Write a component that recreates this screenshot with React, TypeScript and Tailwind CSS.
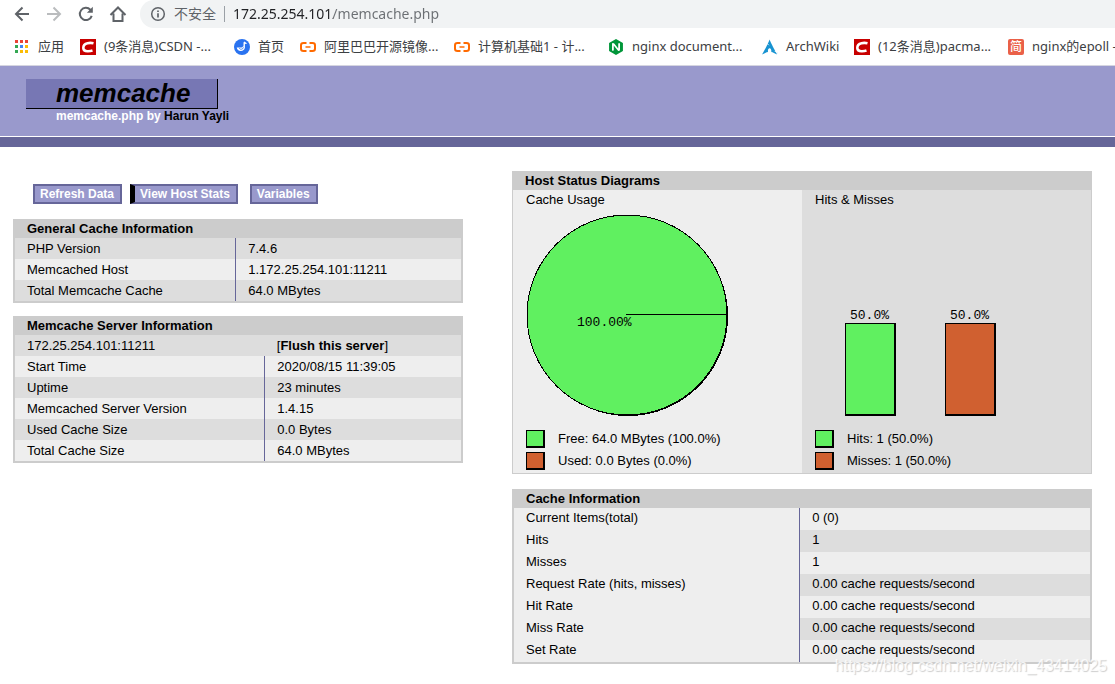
import type { ReactNode } from "react";
import { SiArchlinux, SiNginx } from "react-icons/si";

type Row = { label: string; value: ReactNode };

const GREEN = "#60f060";
const RED = "#d06030";

const generalRows: Row[] = [
  { label: "PHP Version", value: "7.4.6" },
  { label: "Memcached Host", value: "1.172.25.254.101:11211" },
  { label: "Total Memcache Cache", value: "64.0 MBytes" },
];

const serverRows: Row[] = [
  { label: "Start Time", value: "2020/08/15 11:39:05" },
  { label: "Uptime", value: "23 minutes" },
  { label: "Memcached Server Version", value: "1.4.15" },
  { label: "Used Cache Size", value: "0.0 Bytes" },
  { label: "Total Cache Size", value: "64.0 MBytes" },
];

const cacheRows: Row[] = [
  { label: "Current Items(total)", value: "0 (0)" },
  { label: "Hits", value: "1" },
  { label: "Misses", value: "1" },
  { label: "Request Rate (hits, misses)", value: "0.00 cache requests/second" },
  { label: "Hit Rate", value: "0.00 cache requests/second" },
  { label: "Miss Rate", value: "0.00 cache requests/second" },
  { label: "Set Rate", value: "0.00 cache requests/second" },
];

function AppsIcon() {
  const colors = [
    "#ea4335", "#ea4335", "#ea4335",
    "#34a853", "#4285f4", "#fbbc05",
    "#34a853", "#fbbc05", "#fbbc05",
  ];
  return (
    <svg viewBox="0 0 16 16" className="size-4" shapeRendering="crispEdges">
      {colors.map((c, i) => (
        <rect key={i} x={1 + (i % 3) * 5} y={1 + Math.floor(i / 3) * 5} width="3" height="3" fill={c} />
      ))}
    </svg>
  );
}

function CsdnIcon() {
  return (
    <svg viewBox="0 0 16 16" className="size-4">
      <rect width="16" height="16" fill="#c80000" />
      <path
        d="M13.500 4.300C11.500 3.800 9.400 3.800 7.500 4.200C4.800 4.800 3.300 6.600 3.300 8.900C3.400 11.300 5.300 12.300 8 12.200C9.700 12.200 11.200 12 12.500 11.600"
        fill="none"
        stroke="#fff"
        strokeWidth="2.6"
      />
    </svg>
  );
}

function HomePageIcon() {
  return (
    <svg viewBox="0 0 16 16" className="size-4">
      <circle cx="8" cy="8" r="8" fill="#2a73f0" />
      <path d="M10.300 2.500L13.300 4.400L10.900 5V8.800A4.200 4.200 0 0 1 2.700 8.500H7.600L9.500 7.200V3.400Z" fill="#fff" />
      <path d="M9.400 8.300A2.300 2.300 0 0 1 5.200 9.200" fill="none" stroke="#2a73f0" strokeWidth=".8" />
    </svg>
  );
}

function AliyunIcon() {
  return (
    <svg viewBox="0 0 16 16" className="size-4" fill="none" stroke="#ff6a00" strokeWidth="2">
      <path d="M6.500 4H3.500Q1 4 1 6.300V9.700Q1 12 3.500 12H6.500" />
      <path d="M9.500 4H12.500Q15 4 15 6.300V9.700Q15 12 12.500 12H9.500" />
      <path d="M5.500 8H10.500" strokeWidth="1.500" />
    </svg>
  );
}

function JianshuIcon() {
  return (
    <span className="flex size-4 items-center justify-center rounded-xs bg-[#ea6048] text-xs font-medium text-white">
      简
    </span>
  );
}

const bookmarks = [
  { label: "应用", icon: <AppsIcon />, width: "w-[66px]" },
  { label: "(9条消息)CSDN -...", icon: <CsdnIcon />, width: "w-[154px]" },
  { label: "首页", icon: <HomePageIcon />, width: "w-[66px]" },
  { label: "阿里巴巴开源镜像...", icon: <AliyunIcon />, width: "w-[154px]" },
  { label: "计算机基础1 - 计...", icon: <AliyunIcon />, width: "w-[154px]" },
  { label: "nginx document...", icon: <SiNginx className="size-4 text-[#009639]" />, width: "w-[154px]" },
  { label: "ArchWiki", icon: <SiArchlinux className="size-4 text-[#1793d1]" />, width: "w-[92px]" },
  { label: "(12条消息)pacma...", icon: <CsdnIcon />, width: "w-[154px]" },
  { label: "nginx的epoll -", icon: <JianshuIcon />, width: "w-[154px]" },
];

function BrowserBar() {
  return (
    <div className="bg-white font-['Noto_Sans','Noto_Sans_CJK_SC',sans-serif]">
      <div className="flex h-7 items-center gap-3 pl-3 text-[#5f6368]">
        <button aria-label="Back" className="size-5">
          <svg viewBox="0 0 20 20" className="size-5" fill="none" stroke="currentColor" strokeWidth="2">
            <path d="M17 10H4.500M10.500 3.500L4 10L10.500 16.500" />
          </svg>
        </button>
        <button aria-label="Forward" className="size-5 text-[#babcbe]">
          <svg viewBox="0 0 20 20" className="size-5" fill="none" stroke="currentColor" strokeWidth="2">
            <path d="M3 10H15.500M9.500 3.500L16 10L9.500 16.500" />
          </svg>
        </button>
        <button aria-label="Reload" className="size-5">
          <svg viewBox="0 0 22 22" className="size-5" fill="none" stroke="currentColor" strokeWidth="2.2">
            <path d="M17.300 13A6.700 6.700 0 1 1 15.800 6.300L17 7.500" />
            <path d="M18.500 3V9.500H12Z" fill="currentColor" stroke="none" />
          </svg>
        </button>
        <button aria-label="Home" className="size-5">
          <svg viewBox="0 0 20 20" className="size-5" fill="none" stroke="currentColor" strokeWidth="2">
            <path d="M2.500 11L10 3.500L17.500 11M5.500 9.500V17H14.500V9.500" />
          </svg>
        </button>
        <div className="flex h-7 flex-1 items-center gap-2 rounded-l-full bg-[#f1f3f4] pl-2.5">
          <svg viewBox="0 0 16 16" className="size-4" fill="none" stroke="currentColor" strokeWidth="1.500">
            <circle cx="8" cy="8" r="6.300" />
            <path d="M8 7.200V11.500M8 4.500V6" strokeWidth="1.700" />
          </svg>
          <span className="text-sm">不安全</span>
          <span className="h-4 w-px bg-[#9aa0a6]" />
          <input
            aria-label="Address"
            defaultValue="172.25.254.101/memcache.php"
            className="flex-1 bg-linear-to-r from-[#202124] from-[100px] to-[#6b6f73] to-[100px] bg-clip-text text-sm text-transparent outline-none"
          />
        </div>
      </div>
      <nav className="flex h-[38px] overflow-hidden border-b border-[#d5d5e0] pl-3.5 text-[13px] text-[#3c4043]">
        {bookmarks.map((b) => (
          <a key={b.label} href="#" className={`flex shrink-0 items-center gap-2 whitespace-nowrap ${b.width}`}>
            {b.icon}
            {b.label}
          </a>
        ))}
      </nav>
    </div>
  );
}

function Header() {
  return (
    <header>
      <div className="h-[70px] bg-[#9999cc] pt-[13px] pl-[26px] font-bold">
        <h1 className="h-[30px] w-48 border-r border-b border-black bg-[#7777b4] pl-[30px] text-[26px] leading-7 italic">
          <a href="#">memcache</a>
        </h1>
        <p className="pl-[30px] text-xs leading-[14px] text-white">
          <a href="#">memcache.php</a> by <a href="#" className="text-black">Harun Yayli</a>
        </p>
      </div>
      <div className="mt-px h-2.5 bg-[#666699]" />
    </header>
  );
}

function Menu() {
  const item = "border-2 border-[#666699] bg-[#9999cc] pr-1.5 pl-[5px] leading-4";
  return (
    <nav className="mb-0.5 flex pl-5 text-xs font-bold text-white">
      <a href="#" className={`${item} mr-2`}>Refresh Data</a>
      <a href="#" className={`${item} mr-3 border-l-[5px] border-l-black`}>View Host Stats</a>
      <a href="#" className={item}>Variables</a>
    </nav>
  );
}

function Panel({ title, children }: { title: string; children: ReactNode }) {
  return (
    <section className="border-2 border-[#cccccc]">
      <h2 className="bg-[#cccccc] px-3 pb-px leading-4 font-bold">{title}</h2>
      {children}
    </section>
  );
}

function InfoTable({ rows, first, labelWidth }: { rows: Row[]; first?: ReactNode; labelWidth: string }) {
  return (
    <table className="w-full table-fixed">
      <colgroup>
        <col className={labelWidth} />
        <col />
      </colgroup>
      <tbody className="leading-[21px] *:odd:bg-[#dddddd] *:even:bg-[#eeeeee]">
        {first}
        {rows.map((r) => (
          <tr key={r.label}>
            <td className="border-r border-[#666699] px-3">{r.label}</td>
            <td className="px-3">{r.value}</td>
          </tr>
        ))}
      </tbody>
    </table>
  );
}

function Legend({ color, children }: { color: string; children: ReactNode }) {
  return (
    <li className="flex h-[22px] items-center gap-[13px]">
      <span
        className="h-[18px] w-[19px] border border-r-2 border-b-2 border-black"
        style={{ backgroundColor: color }}
      />
      {children}
    </li>
  );
}

function PieChart() {
  return (
    <svg width="210" height="210" shapeRendering="crispEdges" role="img" aria-label="Cache usage">
      <circle cx="102" cy="103" r="100" fill="#000" />
      <circle cx="101" cy="102" r="100" fill={GREEN} stroke="#000" />
      <path d="M100 101.500H201" stroke="#000" />
      <text x="51" y="113" className="font-['Liberation_Mono',monospace] text-[13px]">100.00%</text>
    </svg>
  );
}

function Bar({ x, color, label }: { x: number; color: string; label: string }) {
  return (
    <>
      <rect x={x} y="110" width="51" height="93" fill="#000" />
      <rect x={x + 1} y="111" width="48" height="90" fill={color} />
      <text x={x + 5} y="106" className="font-['Liberation_Mono',monospace] text-[13px]">{label}</text>
    </>
  );
}

function BarChart() {
  return (
    <svg width="210" height="210" shapeRendering="crispEdges" role="img" aria-label="Hits and misses">
      <Bar x={30} color={GREEN} label="50.0%" />
      <Bar x={130} color={RED} label="50.0%" />
    </svg>
  );
}

function Diagrams() {
  return (
    <section className="border border-[#cccccc]">
      <h2 className="bg-[#cccccc] px-3 leading-[18px] font-bold">Host Status Diagrams</h2>
      <div className="grid grid-cols-2">
        <div className="bg-[#eeeeee] px-[13px] pb-px">
          <h3 className="h-[23px] leading-5">Cache Usage</h3>
          <PieChart />
          <ul className="mt-[5px]">
            <Legend color={GREEN}>Free: 64.0 MBytes (100.0%)</Legend>
            <Legend color={RED}>Used: 0.0 Bytes (0.0%)</Legend>
          </ul>
        </div>
        <div className="bg-[#dddddd] px-[13px] pb-px">
          <h3 className="h-[23px] leading-5">Hits &amp; Misses</h3>
          <BarChart />
          <ul className="mt-[5px]">
            <Legend color={GREEN}>Hits: 1 (50.0%)</Legend>
            <Legend color={RED}>Misses: 1 (50.0%)</Legend>
          </ul>
        </div>
      </div>
    </section>
  );
}

export default function App() {
  return (
    <div className="relative min-h-screen overflow-hidden bg-white font-['Liberation_Sans',sans-serif] text-[13px] text-black">
      <BrowserBar />
      <Header />
      <main className="grid grid-cols-[450fr_580fr] gap-x-[49px] pt-6 pr-[23px] pb-5 pl-[13px]">
        <div className="flex flex-col gap-[13px] pt-[13px]">
          <Menu />
          <Panel title="General Cache Information">
            <InfoTable rows={generalRows} labelWidth="w-[49.5%]" />
          </Panel>
          <Panel title="Memcache Server Information">
            <InfoTable
              rows={serverRows}
              labelWidth="w-[56%]"
              first={
                <tr>
                  <td className="px-3">172.25.254.101:11211</td>
                  <td className="px-3">
                    [<a href="#" className="font-bold">Flush this server</a>]
                  </td>
                </tr>
              }
            />
          </Panel>
        </div>
        <div className="flex flex-col gap-[15px]">
          <Diagrams />
          <Panel title="Cache Information">
            <table className="w-full table-fixed">
              <colgroup>
                <col className="w-[49.6%]" />
                <col />
              </colgroup>
              <tbody className="leading-5">
                {cacheRows.map((r) => (
                  <tr key={r.label} className="group">
                    <td className="border-r border-[#666699] bg-[#eeeeee] px-3 pb-0.5">{r.label}</td>
                    <td className="bg-[#eeeeee] px-3 pb-0.5 group-even:bg-[#dddddd]">{r.value}</td>
                  </tr>
                ))}
              </tbody>
            </table>
          </Panel>
        </div>
      </main>
      <p className="absolute right-2 bottom-2 text-base leading-5 text-white/80 [text-shadow:1px_1px_1px_#cccccc]">
        https://blog.csdn.net/weixin_43414025
      </p>
    </div>
  );
}
